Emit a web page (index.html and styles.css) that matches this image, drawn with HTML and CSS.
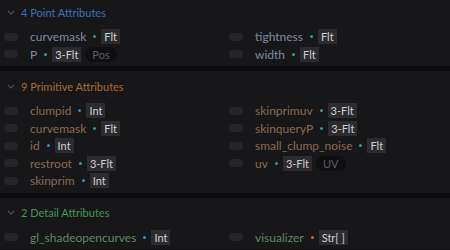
FILE: index.html
```html
<!DOCTYPE html>
<html lang="en">
<head>
    <meta charset="UTF-8">
    <title>Attributes</title>
    <link rel="stylesheet" href="styles.css">
</head>
<body>
    <div class="panel">
        <section class="group point first">
            <div class="group-header">
                <svg class="chevron" viewBox="0 0 10 6"><path d="M1 1 L5 5 L9 1"/></svg>
                <span>4 Point Attributes</span>
            </div>
            <div class="attr-grid">
                <div class="attr-col">
                    <div class="attr"><span class="toggle"></span><span class="name">curvemask</span><span class="dot flt"></span><span class="type">Flt</span></div>
                    <div class="attr"><span class="toggle"></span><span class="name">P</span><span class="dot flt"></span><span class="type">3-Flt</span><span class="tag">Pos</span></div>
                </div>
                <div class="attr-col">
                    <div class="attr"><span class="toggle"></span><span class="name">tightness</span><span class="dot flt"></span><span class="type">Flt</span></div>
                    <div class="attr"><span class="toggle"></span><span class="name">width</span><span class="dot flt"></span><span class="type">Flt</span></div>
                </div>
            </div>
        </section>

        <section class="group prim">
            <div class="group-header">
                <svg class="chevron" viewBox="0 0 10 6"><path d="M1 1 L5 5 L9 1"/></svg>
                <span>9 Primitive Attributes</span>
            </div>
            <div class="attr-grid">
                <div class="attr-col">
                    <div class="attr"><span class="toggle"></span><span class="name">clumpid</span><span class="dot int"></span><span class="type">Int</span></div>
                    <div class="attr"><span class="toggle"></span><span class="name">curvemask</span><span class="dot flt"></span><span class="type">Flt</span></div>
                    <div class="attr"><span class="toggle"></span><span class="name">id</span><span class="dot int"></span><span class="type">Int</span></div>
                    <div class="attr"><span class="toggle"></span><span class="name">restroot</span><span class="dot flt"></span><span class="type">3-Flt</span></div>
                    <div class="attr"><span class="toggle"></span><span class="name">skinprim</span><span class="dot int"></span><span class="type">Int</span></div>
                </div>
                <div class="attr-col">
                    <div class="attr"><span class="toggle"></span><span class="name">skinprimuv</span><span class="dot flt"></span><span class="type">3-Flt</span></div>
                    <div class="attr"><span class="toggle"></span><span class="name">skinqueryP</span><span class="dot flt"></span><span class="type">3-Flt</span></div>
                    <div class="attr"><span class="toggle"></span><span class="name">small_clump_noise</span><span class="dot flt"></span><span class="type">Flt</span></div>
                    <div class="attr"><span class="toggle"></span><span class="name">uv</span><span class="dot flt"></span><span class="type">3-Flt</span><span class="tag">UV</span></div>
                </div>
            </div>
        </section>

        <section class="group detail">
            <div class="group-header">
                <svg class="chevron" viewBox="0 0 10 6"><path d="M1 1 L5 5 L9 1"/></svg>
                <span>2 Detail Attributes</span>
            </div>
            <div class="attr-grid">
                <div class="attr-col">
                    <div class="attr"><span class="toggle"></span><span class="name">gl_shadeopencurves</span><span class="dot int"></span><span class="type">Int</span></div>
                </div>
                <div class="attr-col">
                    <div class="attr"><span class="toggle"></span><span class="name">visualizer</span><span class="dot str"></span><span class="type">Str[ ]</span></div>
                </div>
            </div>
        </section>
    </div>
</body>
</html>
```

FILE: styles.css
```css
* {
    margin: 0;
    padding: 0;
    box-sizing: border-box;
}
body {
    font-family: Lato, "Noto Sans", sans-serif;
    background: #0e0e10;
    width: 450px;
    height: 250px;
    overflow: hidden;
}
.panel {
    display: flex;
    flex-direction: column;
    gap: 5px;
}
.group {
    background: #17171a;
    padding: 3px 0 3px;
}
.group.first {
    padding-top: 0;
}
.group-header {
    height: 24px;
    display: flex;
    align-items: center;
    gap: 6px;
    padding-left: 7px;
    font-size: 11px;
}
.chevron {
    width: 8px;
    height: 5px;
    fill: none;
    stroke: #55565c;
    stroke-width: 1.3;
}
.point .group-header { color: #3d6fb5; }
.prim .group-header { color: #ac6a2c; }
.detail .group-header { color: #3d9950; }
.attr-grid {
    display: grid;
    grid-template-columns: 225px 225px;
    padding-top: 4px;
}
.attr {
    height: 17.5px;
    display: flex;
    align-items: center;
    font-size: 12px;
}
.toggle {
    width: 14px;
    height: 8px;
    border-radius: 4px;
    background: #252528;
    margin-left: 4px;
    margin-right: 12px;
}
.point .name { color: #7f8aa3; }
.prim .name { color: #8a6a4f; }
.detail .name { color: #5b8a5f; }
.dot {
    width: 3px;
    height: 3px;
    border-radius: 50%;
    margin: 0 5px 0 7px;
}
.dot.flt { background: #27a38a; }
.dot.int { background: #2d8fc4; }
.dot.str { background: #b8702e; }
.type {
    background: #2c2c30;
    color: #cfcfd2;
    font-size: 11px;
    height: 15px;
    line-height: 15px;
    padding: 0 3px;
}
.tag {
    background: #0f0f11;
    color: #5d5e66;
    font-size: 11px;
    height: 15px;
    line-height: 15px;
    padding: 0 7px;
    border-radius: 8px;
    margin-left: 4px;
}
```
